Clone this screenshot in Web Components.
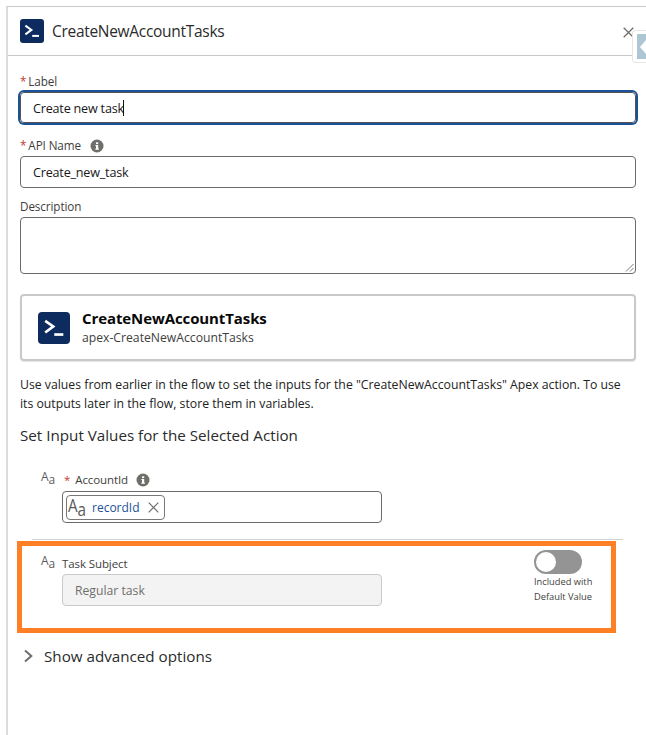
<!DOCTYPE html>
<html><head><meta charset="utf-8"><style>
html,body{margin:0;padding:0;background:#fff}
body{font-family:"Open Sans","Liberation Sans",sans-serif;color:#181818;width:646px;height:735px;overflow:hidden}
</style></head><body>
<flow-panel>
  <panel-header slot="header" title-text="CreateNewAccountTasks"></panel-header>
  <form-field req label="Label" focused value="Create new task" style="margin-top:16px"></form-field>
  <form-field req info label="API Name" value="Create_new_task" style="margin-top:13px"></form-field>
  <form-field multi label="Description" style="margin-top:9px"></form-field>
  <action-card name="CreateNewAccountTasks" sub="apex-CreateNewAccountTasks"></action-card>
  <help-text>Use values from earlier in the flow to set the inputs for the "CreateNewAccountTasks" Apex action. To use its outputs later in the flow, store them in variables.</help-text>
  <section-title>Set Input Values for the Selected Action</section-title>
  <account-param></account-param>
  <subject-param></subject-param>
  <advanced-toggle>Show advanced options</advanced-toggle>
</flow-panel>
<script>
const AA = (s,w,extra='')=>`<span style="display:inline-flex;align-items:flex-end;line-height:1;color:#5c5c5c;font-family:'Open Sans',sans-serif;width:${w}px;${extra}"><span style="font-size:${s}px">A</span><span style="font-size:${s}px;transform:translateY(${s*0.22}px)">a</span></span>`;
const TERM = (n)=>`<svg width="${n}" height="${n}" viewBox="0 0 24 24" style="display:block;flex:none"><rect width="24" height="24" rx="3" fill="#0d2b5e"/><path d="M5.4 6.6 11.4 10.9 5.4 15.4" fill="none" stroke="#fff" stroke-width="2"/><path d="M12.2 16.9H19" stroke="#fff" stroke-width="2"/></svg>`;
const INFO = `<svg width="14" height="14" viewBox="0 0 14 14" style="display:block"><circle cx="7" cy="7" r="6.5" fill="#706e6b"/><rect x="6" y="6" width="2.2" height="4.4" fill="#fff"/><rect x="5.2" y="9.6" width="3.8" height="1" fill="#fff"/><rect x="5.4" y="6" width="1" height="1" fill="#fff"/><rect x="6" y="3.3" width="2.2" height="1.8" fill="#fff"/></svg>`;
function def(name, css, html){
  customElements.define(name, class extends HTMLElement{
    connectedCallback(){
      if(this.shadowRoot) return;
      const r=this.attachShadow({mode:'open'});
      r.innerHTML=`<style>${css}</style>`+(typeof html==='function'?html(this):html);
    }
  });
}
def('flow-panel',`
 :host{display:block;position:relative;box-sizing:border-box;margin:6px 0 0 6px;width:640px;height:729px;border-top:1px solid #c9c9c9;border-left:2px solid #dcdcdc}
 .body{padding:0 10px 0 12px}
 .tab{position:absolute;left:624px;top:23px;width:14px;height:33px;box-sizing:border-box;background:#fff;border:1px solid #e6e6e6;border-right:0;border-radius:4px 0 0 4px;padding:3px 0 3px 4px}
 .tab div{height:100%;background:#adc6d3;display:flex;align-items:center;justify-content:flex-end}
 .tab i{display:block;border:7px solid transparent;border-right:6px solid #fff;border-left:0}
`,`<slot name="header"></slot><div class="body"><slot></slot></div><div class="tab"><div><i></i></div></div>`);
def('panel-header',`
 :host{display:flex;align-items:center;height:49px;box-sizing:border-box;border-bottom:1px solid #c9c9c9;padding:0 12px 0 12px;gap:8px;font-size:15.5px;letter-spacing:-.3px;color:#2b2b2b}
 .t{flex:1}
 svg.x{display:block;margin-top:2px}
`,h=>`${TERM(24)}<span class="t">${h.getAttribute('title-text')}</span><svg class="x" width="11" height="11" viewBox="0 0 11 11"><path d="M.7.7 10.3 10.3M10.3.7.7 10.3" stroke="#706e6b" stroke-width="1.3" fill="none"/></svg>`);
def('form-field',`
 :host{display:block;font-size:11.7px;letter-spacing:-.1px;color:#3e3e3c}
 .l{display:flex;align-items:center;box-sizing:border-box;height:17px;padding-top:2px;margin-bottom:3px;line-height:15px}
 .r{color:#c23934;margin-right:2px}
 .i{margin-left:9px}
 .box{box-sizing:border-box;height:32px;width:616px;border:1px solid #6b6b6b;border-radius:4px;padding:0 12px;font-size:12.6px;letter-spacing:-.2px;line-height:32px;color:#181818;position:relative}
 .box.f{border:1px solid #555;box-shadow:0 0 0 2px #1b5297;height:31px;line-height:31px}
 .box.m{height:57px}
 .caret{display:inline-block;width:1px;height:16px;background:#111;vertical-align:-3px;margin-left:-1px}
 .grip{position:absolute;right:1px;bottom:1px;display:block}
`,h=>{const f=h.hasAttribute('focused'),m=h.hasAttribute('multi');return `<div class="l">${h.hasAttribute('req')?'<span class="r">*</span>':''}<span>${h.getAttribute('label')}</span>${h.hasAttribute('info')?`<span class="i">${INFO}</span>`:''}</div>
 <div class="box ${f?'f':''} ${m?'m':''}">${h.getAttribute('value')||''}${f?'<span class="caret"></span>':''}${m?'<svg class="grip" width="9" height="9" viewBox="0 0 9 9"><path d="M8.5 1 1 8.5M8.5 5 5 8.5" stroke="#777" fill="none"/></svg>':''}</div>`});
def('action-card',`
 :host{display:flex;align-items:center;box-sizing:border-box;margin:20px 0 0 0;width:616px;height:67px;border:2px solid #c9c9c9;border-radius:4px;padding:0 16px;gap:12px;box-shadow:0 1px 1px #e4e4e4}
 b{display:block;font-size:15px;line-height:20px;color:#080707;font-weight:700;letter-spacing:-.1px}
 span{display:block;font-size:12.2px;line-height:20px;color:#3e3e3c}
`,h=>`${TERM(32)}<div><b>${h.getAttribute('name')}</b><span>${h.getAttribute('sub')}</span></div>`);
def('help-text',`:host{display:block;font-size:12.25px;line-height:19px;margin-top:14px;width:610px;color:#222}`,`<slot></slot>`);
def('section-title',`:host{display:block;font-size:15.2px;line-height:20px;margin-top:12px;color:#2b2b2b}`,`<slot></slot>`);
const rowCss=`
 :host{display:grid;grid-template-columns:21px 320px;column-gap:0;font-size:11.5px;letter-spacing:-.1px;color:#3e3e3c}
 .a{margin-top:-2px;height:16px}
 .l{display:flex;align-items:center;height:17px;line-height:17px}
 .r{color:#c23934;margin:0 5px 0 2px}
 .i{margin-left:8px}
 .box{box-sizing:border-box;width:320px;height:32px;border:1px solid #6b6b6b;border-radius:4px;margin-top:3px;display:flex;align-items:center;padding:0 3px}
`;
def('account-param',rowCss+`
 :host{margin:26px 0 0 21px;width:603px}
 .pill{box-sizing:border-box;display:flex;align-items:center;height:25px;width:99px;border:1px solid #777;border-radius:4px;padding:0 5px 0 1px;font-size:12px;letter-spacing:0;color:#1b5297;gap:4px}
 .x{margin-left:auto;display:block}
 .sep{grid-column:1/3;width:591px;margin-left:-9px;height:1px;background:#d0d0d0;margin-top:16px}
`,`<div class="a">${AA(12,18)}</div><div><div class="l"><span class="r">*</span><span>AccountId</span><span class="i">${INFO}</span></div>
 <div class="box"><div class="pill">${AA(19,20,'font-weight:500;transform:scaleX(.8) translateY(-2px);transform-origin:left center;')}<span>recordId</span><svg class="x" width="11" height="11" viewBox="0 0 11 11"><path d="M.7.7 10.3 10.3M10.3.7.7 10.3" stroke="#706e6b" stroke-width="1.2" fill="none"/></svg></div></div></div>
 <div class="sep"></div>`);
def('subject-param',rowCss+`
 :host{box-sizing:border-box;display:flex;width:599px;height:92px;margin:1px 0 0 -3px;border:5px solid #ff7f27;padding:9px 17px 0 19px}
 .g{display:grid;grid-template-columns:21px 320px;flex:none}
 .box{background:#f3f3f3;border-color:#c9c9c9;padding:0 12px;font-size:12.2px;letter-spacing:0;color:#706e6b;margin-top:2px}
 .t{margin-left:auto;margin-top:-5px;font-size:9.3px;letter-spacing:0;line-height:15px;color:#3e3e3c;width:60px}
 .sw{width:48px;height:24px;border-radius:12px;background:#949494;box-sizing:border-box;padding:2px}
 .sw i{display:block;width:20px;height:20px;border-radius:50%;background:#fff}
`,`<div class="g"><div class="a">${AA(12,18)}</div><div><div class="l">Task Subject</div><div class="box">Regular task</div></div></div>
 <div class="t"><div class="sw"><i></i></div>Included with<br>Default Value</div>`);
def('advanced-toggle',`
 :host{display:flex;align-items:center;gap:11px;margin:13px 0 0 4px;font-size:15.2px;line-height:20px;color:#2b2b2b}
 svg{display:block}
`,`<svg width="9" height="14" viewBox="0 0 9 14"><path d="M1 1.5 7.3 7 1 12.5" fill="none" stroke="#706e6b" stroke-width="2"/></svg><slot></slot>`);
</script>
</body></html>
